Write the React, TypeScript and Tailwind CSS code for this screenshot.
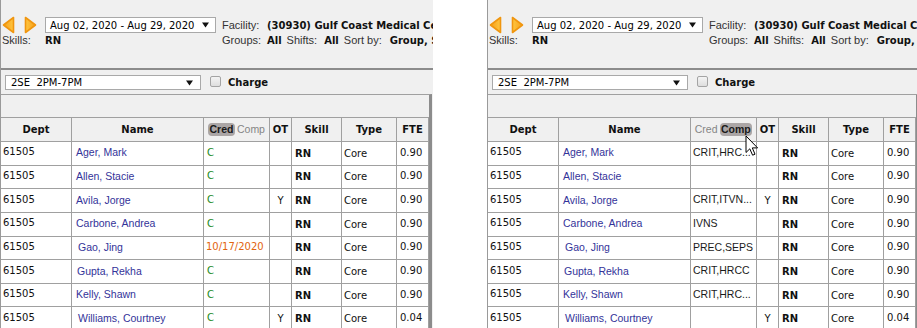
import React from "react";

type Row = {
  name: string;
  cred: string;
  comp: string;
  ot?: boolean;
  fte: string;
  indent?: string;
};

const rows: Row[] = [
  { name: "Ager, Mark", cred: "C", comp: "CRIT,HRC...", fte: "0.90" },
  { name: "Allen, Stacie", cred: "C", comp: "", fte: "0.90" },
  { name: "Avila, Jorge", cred: "C", comp: "CRIT,ITVN...", ot: true, fte: "0.90" },
  { name: "Carbone, Andrea", cred: "C", comp: "IVNS", fte: "0.90" },
  { name: "Gao, Jing", cred: "10/17/2020", comp: "PREC,SEPS", fte: "0.90", indent: "pl-[6px]" },
  { name: "Gupta, Rekha", cred: "C", comp: "CRIT,HRCC", fte: "0.90", indent: "pl-[5px]" },
  { name: "Kelly, Shawn", cred: "C", comp: "CRIT,HRC...", fte: "0.90" },
  { name: "Williams, Courtney", cred: "C", comp: "", ot: true, fte: "0.04", indent: "pl-[6px]" },
];

const verdana = "font-['DejaVu_Sans',Verdana,sans-serif]";
const tahoma = "font-['Liberation_Sans',Tahoma,Arial,sans-serif]";

const NavArrow = ({ dir }: { dir: "left" | "right" }) => (
  <svg width="13" height="18" viewBox="0 0 13 18" className="shrink-0">
    <defs>
      <linearGradient id={`nav-${dir}`} x1="0" y1="0" x2="1" y2="0">
        <stop offset="0" stopColor={dir === "left" ? "#f6a019" : "#ffc640"} />
        <stop offset="1" stopColor={dir === "left" ? "#ffc640" : "#f6a019"} />
      </linearGradient>
    </defs>
    <path
      d={dir === "left" ? "M11.5 1.5 L11.5 16.5 L1.5 9 Z" : "M1.5 1.5 L1.5 16.5 L11.5 9 Z"}
      fill={`url(#nav-${dir})`}
      stroke="#f0960f"
      strokeWidth="1.6"
      strokeLinejoin="round"
    />
  </svg>
);

const DropTriangle = () => (
  <svg width="7" height="6" viewBox="0 0 7 6" className="shrink-0">
    <path d="M0 0.5 H7 L3.5 5.5 Z" fill="#111" />
  </svg>
);

const Cursor = () => (
  <svg width="14" height="22" viewBox="0 0 14 22" className="absolute left-[258px] top-[135px]">
    <path
      d="M1 1 L1 17.5 L4.8 13.8 L7.6 20.2 L10 19.2 L7.3 12.9 L12.6 12.9 Z"
      fill="#fff"
      stroke="#000"
      strokeWidth="1"
      strokeLinejoin="miter"
    />
  </svg>
);

function Panel({ mode, width }: { mode: "cred" | "comp"; width: string }) {
  return (
    <div className={`relative h-full shrink-0 overflow-hidden ${width}`}>
      <div className="h-full w-[433px] border-l border-[#9a9a9a] bg-[#f0f0f0]">
        {/* filter header */}
        <div className="h-[70px] border-b-2 border-[#8c8c8c] pt-[16px]">
          <div className="flex h-[18px] items-center whitespace-nowrap">
            <div className="flex w-[44px] shrink-0 items-center pl-[1px]">
              <NavArrow dir="left" />
              <span className="ml-[9px] flex">
                <NavArrow dir="right" />
              </span>
            </div>
            <div className={`flex h-[16px] w-[171px] shrink-0 items-center justify-between border border-[#a9a9a9] bg-white pl-[4px] pr-[6px] text-[10px] text-black ${verdana}`}>
              <span>Aug 02, 2020 - Aug 29, 2020</span>
              <DropTriangle />
            </div>
            <span className={`ml-[6px] w-[45px] shrink-0 text-[11px] text-[#333] ${tahoma}`}>Facility:</span>
            <span className={`shrink-0 text-[10px] font-bold text-[#111] ${verdana}`}>(30930) Gulf Coast Medical Center</span>
          </div>
          <div className="flex h-[13px] items-baseline whitespace-nowrap leading-[13px]">
            <span className={`w-[44px] shrink-0 pl-[1px] text-[11px] text-[#333] ${tahoma}`}>Skills:</span>
            <span className={`w-[177px] shrink-0 text-[10px] font-bold text-[#111] ${verdana}`}>RN</span>
            <span className={`w-[45px] shrink-0 text-[11px] text-[#333] ${tahoma}`}>Groups:</span>
            <span className={`shrink-0 text-[10px] font-bold text-[#111] ${verdana}`}>All</span>
            <span className={`ml-[5px] shrink-0 text-[11px] text-[#333] ${tahoma}`}>Shifts:</span>
            <span className={`ml-[7px] shrink-0 text-[10px] font-bold text-[#111] ${verdana}`}>All</span>
            <span className={`ml-[5px] shrink-0 text-[11px] text-[#333] ${tahoma}`}>Sort by:</span>
            <span className={`ml-[8px] shrink-0 text-[10px] font-bold text-[#111] ${verdana}`}>Group, Skill</span>
          </div>
        </div>

        {/* shift selector */}
        <div className="flex h-[24px] items-start pt-[5px]">
          <div className={`ml-[4px] flex h-[15px] w-[196px] shrink-0 items-center justify-between border border-[#a9a9a9] bg-white pl-[5px] pr-[7px] text-[10px] text-black ${verdana}`}>
            <span className="whitespace-pre">2SE  2PM-7PM</span>
            <DropTriangle />
          </div>
          <div className="ml-[9px] mt-[1px] h-[11px] w-[11px] shrink-0 rounded-[2px] border border-[#a4a4a4] bg-gradient-to-b from-[#f4f4f4] to-[#dedede]" />
          <span className={`ml-[7px] mt-[1px] shrink-0 text-[10px] font-bold leading-[13px] text-[#111] ${verdana}`}>Charge</span>
        </div>

        {/* roster table */}
        <div className="w-[431px] border-r-[3px] border-t border-[#8c8c8c] border-t-[#a0a0a0]">
          <div className="h-[22px]" />
          <table className={`w-[428px] table-fixed border-separate border-spacing-0 border-t border-[#a0a0a0] text-[10px] text-[#111] ${verdana}`}>
            <thead>
              <tr className="h-[24px] bg-[#f0f0f0] font-bold">
                <th className="w-[71px] border-b border-r border-[#a0a0a0] p-0">Dept</th>
                <th className="w-[132px] border-b border-r border-[#a0a0a0] p-0">Name</th>
                <th className="w-[66px] border-b border-r border-[#a0a0a0] p-0">
                  <div className={`flex items-center justify-center gap-[2px] pb-[1px] text-[10.5px] ${tahoma}`}>
                    {mode === "cred" ? (
                      <>
                        <span className="rounded-[4px] bg-[#aba6a6] px-[1.5px] font-bold leading-[13px] text-[#1a1a1a]">Cred</span>
                        <span className="font-normal leading-[13px] text-[#858585]">Comp</span>
                      </>
                    ) : (
                      <>
                        <span className="font-normal leading-[13px] text-[#858585]">Cred</span>
                        <span className="rounded-[4px] bg-[#aba6a6] px-[1.5px] font-bold leading-[13px] text-[#1a1a1a]">Comp</span>
                      </>
                    )}
                  </div>
                </th>
                <th className="w-[22px] border-b border-r border-[#a0a0a0] p-0">OT</th>
                <th className="w-[50px] border-b border-r border-[#a0a0a0] p-0">Skill</th>
                <th className="w-[55px] border-b border-r border-[#a0a0a0] p-0">Type</th>
                <th className="w-[32px] border-b border-r border-[#a0a0a0] p-0">FTE</th>
              </tr>
            </thead>
            <tbody className="bg-white">
              {rows.map((r) => (
                <tr key={r.name} className="h-[23.65px]">
                  <td className="border-b border-r border-[#a0a0a0] pb-[3px] pl-[2px] align-middle">61505</td>
                  <td className={`truncate border-b border-r border-[#a0a0a0] align-middle text-[10.5px] text-[#333399] ${tahoma} ${r.indent ?? "pl-[4px]"}`}>
                    {r.name}
                  </td>
                  {mode === "cred" ? (
                    <td
                      className={`border-b border-r border-[#a0a0a0] pb-[2px] align-middle ${
                        r.cred === "C" ? "pl-[3px] text-[#1d8a1d]" : "pl-[2px] text-[#e2650f]"
                      }`}
                    >
                      {r.cred}
                    </td>
                  ) : (
                    <td className={`truncate border-b border-r border-[#a0a0a0] pl-[2px] pt-[3px] align-top text-[10.5px] text-[#1a1a1a] ${tahoma}`}>
                      {r.comp}
                    </td>
                  )}
                  <td className="border-b border-r border-[#a0a0a0] pb-[1px] text-center align-middle">{r.ot ? "Y" : ""}</td>
                  <td className="border-b border-r border-[#a0a0a0] pl-[3px] align-middle font-bold">RN</td>
                  <td className="border-b border-r border-[#a0a0a0] pl-[2px] align-middle">Core</td>
                  <td className="border-b border-r border-[#a0a0a0] pb-[2px] pl-[3px] align-middle">{r.fte}</td>
                </tr>
              ))}
            </tbody>
          </table>
        </div>
      </div>
      {mode === "comp" && <Cursor />}
    </div>
  );
}

export default function App() {
  return (
    <div className="flex h-[328px] w-[917px] overflow-hidden bg-white">
      <Panel mode="cred" width="w-[433px]" />
      <div className="w-[54px] shrink-0 bg-white" />
      <Panel mode="comp" width="w-[430px]" />
    </div>
  );
}
